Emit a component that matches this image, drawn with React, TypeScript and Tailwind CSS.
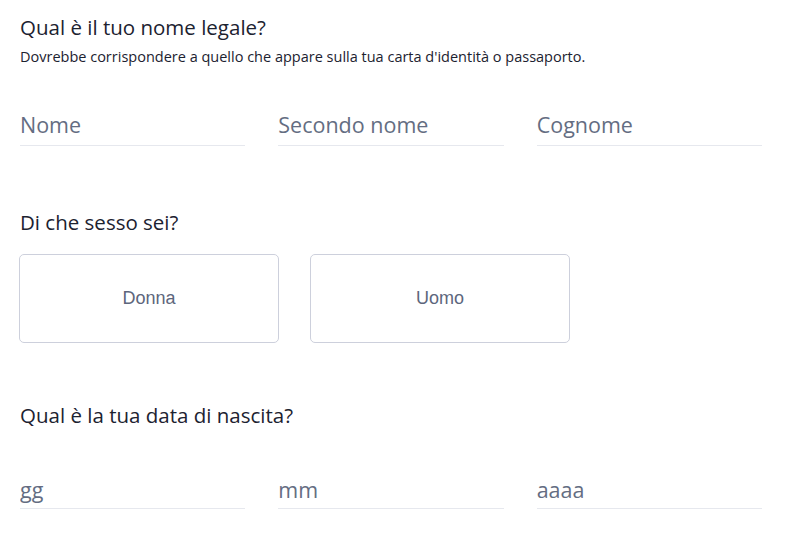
import React from "react";

const heading = "text-[20.5px] leading-7 text-[#1c2230]";

function LineInput({ placeholder, tall = true }: { placeholder: string; tall?: boolean }) {
  return (
    <input
      type="text"
      placeholder={placeholder}
      className={`w-full ${tall ? "h-[44px]" : "h-[40px]"} pt-[2px] border-b border-[#e6e8ee] bg-transparent text-[21.5px] text-[#1c2230] placeholder:text-[#646d82] outline-none`}
    />
  );
}

function ChoiceButton({ label }: { label: string }) {
  return (
    <button
      type="button"
      className="w-[260px] h-[89px] rounded-[5px] border border-[#cdd0dc] bg-white text-[18px] text-[#5d667c]"
      style={{ fontFamily: '"Liberation Sans", Arial, sans-serif' }}
    >
      {label}
    </button>
  );
}

export default function App() {
  return (
    <div
      className="w-[800px] h-[536px] bg-white px-5 pt-[13px] overflow-hidden"
      style={{ fontFamily: '"Open Sans", "Noto Sans", sans-serif' }}
    >
      {/* nome legale */}
      <h2 className={heading}>Qual è il tuo nome legale?</h2>
      <p className="mt-[6px] text-[14.5px] leading-5 text-[#1c2230]">
        Dovrebbe corrispondere a quello che appare sulla tua carta d'identità o passaporto.
      </p>
      <div className="mt-[35px] grid grid-cols-3 gap-x-[33px] w-[742px]">
        <LineInput placeholder="Nome" />
        <LineInput placeholder="Secondo nome" />
        <LineInput placeholder="Cognome" />
      </div>

      {/* sesso */}
      <h2 className={`${heading} mt-[62px]`}>Di che sesso sei?</h2>
      <div className="mt-[18px] flex gap-[31px] -ml-px">
        <ChoiceButton label="Donna" />
        <ChoiceButton label="Uomo" />
      </div>

      {/* data di nascita */}
      <h2 className={`${heading} mt-[58px]`}>Qual è la tua data di nascita?</h2>
      <div className="mt-[40px] grid grid-cols-3 gap-x-[33px] w-[742px]">
        <LineInput placeholder="gg" tall={false} />
        <LineInput placeholder="mm" tall={false} />
        <LineInput placeholder="aaaa" tall={false} />
      </div>
    </div>
  );
}
